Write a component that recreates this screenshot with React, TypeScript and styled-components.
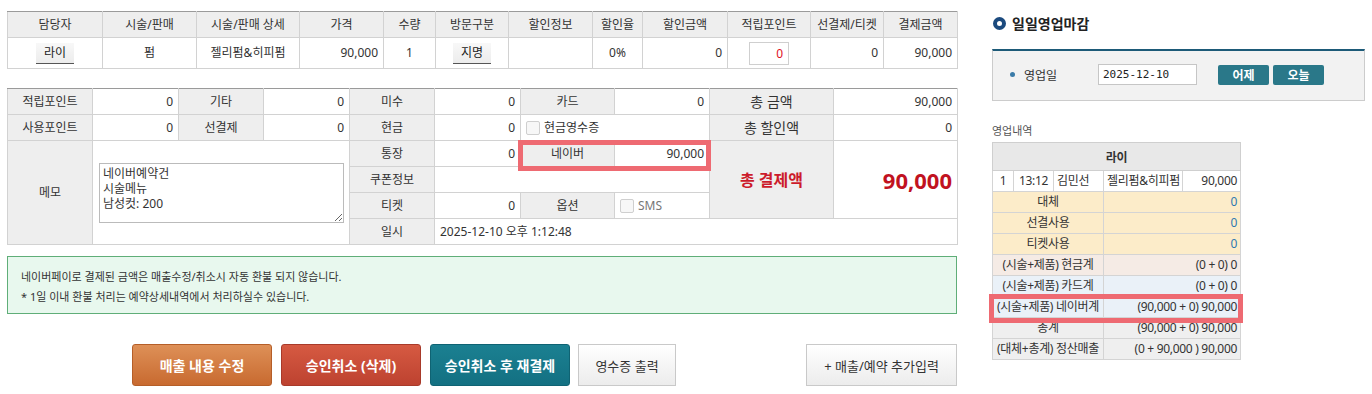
import React from 'react'
import styled, { createGlobalStyle, css } from 'styled-components'

const GlobalStyle = createGlobalStyle`
  body {
    margin: 0;
    background: #fff;
    font-family: "Noto Sans", "Noto Sans CJK KR", sans-serif;
    font-size: 12px;
    color: #333;
  }
`

// ---- layout ----
const Page = styled.div`
  display: flex;
  width: 1372px;
  height: 394px;
  overflow: hidden;
`

const LeftCol = styled.div`
  width: 950px;
  padding: 11px 0 0 7px;
`

const RightCol = styled.div`
  width: 373px;
  margin-left: 35px;
`

// ---- tables ----
const GridTable = styled.table`
  width: 950px;
  border-collapse: collapse;
  table-layout: fixed;
`

const Th = styled.th`
  height: 25px;
  padding: 0;
  background: #eeeeee;
  border: 1px solid #d2d2d2;
  border-top: 1px solid #9a9a9a;
  font-weight: normal;
  font-size: 12px;
  color: #333;
  line-height: 14px;
`

const Td = styled.td<{ $align?: string; $h?: number; $top?: boolean }>`
  height: ${p => p.$h ?? 25}px;
  padding: 0 5px;
  border: 1px solid #d2d2d2;
  ${p => p.$top && css`border-top: 1px solid #9a9a9a;`}
  text-align: ${p => p.$align ?? 'center'};
  font-size: 12px;
  color: #333;
  line-height: 14px;
  background: #fff;
`

const LabelTd = styled(Td)<{ $big?: boolean }>`
  background: #eeeeee;
  text-align: center;
  ${p => p.$big && css`
    font-size: 14px;
  `}
`

const SmallBtn = styled.span`
  display: inline-block;
  width: 38px;
  height: 20px;
  line-height: 20px;
  background: linear-gradient(#f8f8f8, #ececec);
  border-bottom: 1px solid #555;
  font-size: 12px;
  color: #222;
`

const PointInput = styled.span`
  display: inline-block;
  box-sizing: border-box;
  width: 40px;
  height: 23px;
  line-height: 21px;
  border: 1px solid #cfcfcf;
  text-align: right;
  padding-right: 5px;
  color: #e0101f;
`

const MidWrap = styled.div`
  position: relative;
  margin-top: 19px;
`

const MemoCell = styled.td`
  border: 1px solid #d2d2d2;
  padding: 0 6px;
  background: #fff;
`

const MemoArea = styled.textarea`
  display: block;
  box-sizing: border-box;
  width: 245px;
  height: 60px;
  border: 1px solid #bbb;
  padding: 2px 3px;
  resize: both;
  font-family: "Noto Sans", "Noto Sans CJK KR", sans-serif;
  font-size: 12px;
  line-height: 15px;
  color: #333;
`

const Check = styled.label<{ $muted?: boolean }>`
  display: flex;
  align-items: center;
  gap: 4px;
  color: ${p => (p.$muted ? '#777' : '#333')};
  &::before {
    content: '';
    width: 12px;
    height: 12px;
    border: 1px solid #cfcfcf;
    border-radius: 2px;
    background: #f7f7f7;
  }
`

const TotalLabel = styled(LabelTd)`
  font-size: 16px;
  font-weight: bold;
  color: #cc1b2b;
`

const TotalValue = styled(Td)`
  text-align: right;
  font-size: 22px;
  font-weight: bold;
  color: #c1121f;
  padding-right: 5px;
`

const Highlight = styled.div<{ $l: number; $t: number; $w: number; $h: number }>`
  position: absolute;
  left: ${p => p.$l}px;
  top: ${p => p.$t}px;
  width: ${p => p.$w}px;
  height: ${p => p.$h}px;
  box-sizing: border-box;
  border: 5px solid #ee6a72;
  pointer-events: none;
`

// ---- notice / buttons ----
const Notice = styled.div`
  margin-top: 11px;
  box-sizing: border-box;
  height: 58px;
  padding: 10px 13px;
  background: #e8f8ee;
  border: 1px solid #5fae78;
  font-size: 11px;
  line-height: 20px;
  color: #333;
`

const ButtonRow = styled.div`
  display: flex;
  align-items: center;
  gap: 8px;
  margin-top: 30px;
  padding-left: 125px;
`

const palette = {
  orange: ['#de9057', '#c86a30', '#b55e28'],
  red: ['#d65a42', '#bd4230', '#a83a2a'],
  teal: ['#1b8091', '#137082', '#0f6373'],
}

const ColorBtn = styled.button<{ $tone: keyof typeof palette }>`
  width: 140px;
  height: 42px;
  border-radius: 3px;
  border: 1px solid ${p => palette[p.$tone][2]};
  background: linear-gradient(${p => palette[p.$tone][0]}, ${p => palette[p.$tone][1]});
  color: #fff;
  font-family: inherit;
  font-size: 14px;
  font-weight: bold;
  & + & { margin-left: 1px; }
`

const GrayBtn = styled.button<{ $w: number; $push?: boolean }>`
  width: ${p => p.$w}px;
  height: 42px;
  border: 1px solid #c9c9c9;
  background: linear-gradient(#ffffff, #ececec);
  color: #333;
  font-family: inherit;
  font-size: 13px;
  ${p => p.$push && css`margin-left: auto;`}
`

// ---- right panel ----
const Title = styled.h3`
  display: flex;
  align-items: center;
  gap: 6px;
  height: 46px;
  margin: 0;
  font-size: 14px;
  font-weight: bold;
  color: #222;
  &::before {
    content: '';
    box-sizing: border-box;
    width: 13px;
    height: 13px;
    margin-left: 1px;
    border-radius: 50%;
    border: 4px solid #1b4a7e;
  }
`

const DateBox = styled.div`
  display: flex;
  align-items: center;
  box-sizing: border-box;
  margin-top: 3px;
  height: 52px;
  padding-left: 17px;
  background: #f2f2f2;
  border: 1px solid #cccccc;
  border-top: 2px solid #1d5a78;
  padding-bottom: 2px;
`

const Dot = styled.span`
  width: 5px;
  height: 5px;
  border-radius: 50%;
  background: #3b7ba8;
  margin-right: 9px;
`

const FieldName = styled.span`
  width: 74px;
  font-size: 12px;
  color: #333;
`

const DateInput = styled.span`
  box-sizing: border-box;
  width: 99px;
  height: 21px;
  line-height: 19px;
  padding-left: 4px;
  border: 1px solid #c6c6c6;
  background: #fff;
  font-family: "DejaVu Sans Mono", monospace;
  font-size: 11px;
  color: #222;
`

const DayBtn = styled.button`
  width: 51px;
  height: 20px;
  padding: 0;
  border: none;
  border-radius: 2px;
  background: #2a7889;
  color: #fff;
  font-family: inherit;
  font-size: 12px;
  font-weight: bold;
  & + & { margin-left: 4px; }
  &:first-of-type { margin-left: 21px; }
`

const SubLabel = styled.div`
  margin-top: 23px;
  height: 14px;
  line-height: 14px;
  font-size: 11px;
  color: #555;
`

const SalesWrap = styled.div`
  position: relative;
`

const SalesTable = styled.table`
  margin-top: 4px;
  width: 248px;
  border-collapse: collapse;
  table-layout: fixed;
  letter-spacing: -0.3px;
`

const SalesHead = styled.th`
  height: 27px;
  padding: 0;
  background: #e8e8e8;
  border: 1px solid #cfcfcf;
  font-size: 12px;
  font-weight: bold;
  color: #333;
`

const rowTones = {
  white: '#ffffff',
  cream: '#fcecc9',
  peach: '#f5ebe5',
  blue: '#eaf1f8',
  gray: '#efefef',
}

const STd = styled.td<{ $tone?: keyof typeof rowTones; $align?: string; $blue?: boolean }>`
  height: 20px;
  padding: 0 3px;
  border: 1px solid #d4d4d4;
  background: ${p => rowTones[p.$tone ?? 'white']};
  text-align: ${p => p.$align ?? 'center'};
  font-size: 12px;
  line-height: 14px;
  color: ${p => (p.$blue ? '#2f78b0' : '#333')};
  white-space: nowrap;
  overflow: hidden;
`

const summaryRows: { label: string; value: string; tone: keyof typeof rowTones; blue?: boolean }[] = [
  { label: '대체', value: '0', tone: 'cream', blue: true },
  { label: '선결사용', value: '0', tone: 'cream', blue: true },
  { label: '티켓사용', value: '0', tone: 'cream', blue: true },
  { label: '(시술+제품) 현금계', value: '(0 + 0) 0', tone: 'peach' },
  { label: '(시술+제품) 카드계', value: '(0 + 0) 0', tone: 'blue' },
  { label: '(시술+제품) 네이버계', value: '(90,000 + 0) 90,000', tone: 'blue' },
  { label: '총계', value: '(90,000 + 0) 90,000', tone: 'gray' },
  { label: '(대체+총계) 정산매출', value: '(0 + 90,000 ) 90,000', tone: 'gray' },
]

const headers = ['담당자', '시술/판매', '시술/판매 상세', '가격', '수량', '방문구분', '할인정보', '할인율', '할인금액', '적립포인트', '선결제/티켓', '결제금액']
const topWidths = [95, 94, 103, 84, 52, 73, 84, 50, 85, 83, 73, 74]
const midWidths = [85, 86, 85, 86, 85, 86, 94, 95, 124, 124]

export default function App() {
  return (
    <>
      <GlobalStyle />
      <Page>
        <LeftCol>
          <GridTable>
            <colgroup>
              {topWidths.map((w, i) => <col key={i} style={{ width: w }} />)}
            </colgroup>
            <thead>
              <tr>{headers.map(h => <Th key={h}>{h}</Th>)}</tr>
            </thead>
            <tbody>
              <tr>
                <Td $h={30}><SmallBtn>라이</SmallBtn></Td>
                <Td $h={30}>펌</Td>
                <Td $h={30}>젤리펌&amp;히피펌</Td>
                <Td $h={30} $align="right">90,000</Td>
                <Td $h={30}>1</Td>
                <Td $h={30}><SmallBtn>지명</SmallBtn></Td>
                <Td $h={30}></Td>
                <Td $h={30}>0%</Td>
                <Td $h={30} $align="right">0</Td>
                <Td $h={30}><PointInput>0</PointInput></Td>
                <Td $h={30} $align="right">0</Td>
                <Td $h={30} $align="right">90,000</Td>
              </tr>
            </tbody>
          </GridTable>

          <MidWrap>
            <GridTable>
              <colgroup>
                {midWidths.map((w, i) => <col key={i} style={{ width: w }} />)}
              </colgroup>
              <tbody>
                <tr>
                  <LabelTd $top>적립포인트</LabelTd>
                  <Td $top $align="right">0</Td>
                  <LabelTd $top>기타</LabelTd>
                  <Td $top $align="right">0</Td>
                  <LabelTd $top>미수</LabelTd>
                  <Td $top $align="right">0</Td>
                  <LabelTd $top>카드</LabelTd>
                  <Td $top $align="right">0</Td>
                  <LabelTd $top $big>총 금액</LabelTd>
                  <Td $top $align="right">90,000</Td>
                </tr>
                <tr>
                  <LabelTd>사용포인트</LabelTd>
                  <Td $align="right">0</Td>
                  <LabelTd>선결제</LabelTd>
                  <Td $align="right">0</Td>
                  <LabelTd>현금</LabelTd>
                  <Td $align="right">0</Td>
                  <Td colSpan={2} $align="left"><Check>현금영수증</Check></Td>
                  <LabelTd $big>총 할인액</LabelTd>
                  <Td $align="right">0</Td>
                </tr>
                <tr>
                  <LabelTd rowSpan={4}>메모</LabelTd>
                  <MemoCell colSpan={3} rowSpan={4}>
                    <MemoArea defaultValue={'네이버예약건\n시술메뉴\n남성컷: 200'} />
                  </MemoCell>
                  <LabelTd>통장</LabelTd>
                  <Td $align="right">0</Td>
                  <LabelTd>네이버</LabelTd>
                  <Td $align="right">90,000</Td>
                  <TotalLabel rowSpan={3}>총 결제액</TotalLabel>
                  <TotalValue rowSpan={3}>90,000</TotalValue>
                </tr>
                <tr>
                  <LabelTd>쿠폰정보</LabelTd>
                  <Td colSpan={3}></Td>
                </tr>
                <tr>
                  <LabelTd>티켓</LabelTd>
                  <Td $align="right">0</Td>
                  <LabelTd>옵션</LabelTd>
                  <Td $align="left"><Check $muted>SMS</Check></Td>
                </tr>
                <tr>
                  <LabelTd>일시</LabelTd>
                  <Td colSpan={5} $align="left">2025-12-10 오후 1:12:48</Td>
                </tr>
              </tbody>
            </GridTable>
            <Highlight $l={511} $t={52} $w={193} $h={31} />
          </MidWrap>

          <Notice>
            네이버페이로 결제된 금액은 매출수정/취소시 자동 환불 되지 않습니다.<br />
            * 1일 이내 환불 처리는 예약상세내역에서 처리하실수 있습니다.
          </Notice>

          <ButtonRow>
            <ColorBtn $tone="orange">매출 내용 수정</ColorBtn>
            <ColorBtn $tone="red">승인취소 (삭제)</ColorBtn>
            <ColorBtn $tone="teal">승인취소 후 재결제</ColorBtn>
            <GrayBtn $w={98}>영수증 출력</GrayBtn>
            <GrayBtn $w={151} $push>+ 매출/예약 추가입력</GrayBtn>
          </ButtonRow>
        </LeftCol>

        <RightCol>
          <Title>일일영업마감</Title>
          <DateBox>
            <Dot />
            <FieldName>영업일</FieldName>
            <DateInput>2025-12-10</DateInput>
            <DayBtn>어제</DayBtn>
            <DayBtn>오늘</DayBtn>
          </DateBox>

          <SubLabel>영업내역</SubLabel>
          <SalesWrap>
            <SalesTable>
              <colgroup>
                <col style={{ width: 21 }} />
                <col style={{ width: 40 }} />
                <col style={{ width: 50 }} />
                <col style={{ width: 79 }} />
                <col style={{ width: 58 }} />
              </colgroup>
              <thead>
                <tr><SalesHead colSpan={5}>라이</SalesHead></tr>
              </thead>
              <tbody>
                <tr>
                  <STd>1</STd>
                  <STd>13:12</STd>
                  <STd $align="left">김민선</STd>
                  <STd>젤리펌&amp;히피펌</STd>
                  <STd $align="right">90,000</STd>
                </tr>
                {summaryRows.map(r => (
                  <tr key={r.label}>
                    <STd colSpan={3} $tone={r.tone}>{r.label}</STd>
                    <STd colSpan={2} $tone={r.tone} $align="right" $blue={r.blue}>{r.value}</STd>
                  </tr>
                ))}
              </tbody>
            </SalesTable>
            <Highlight $l={-3} $t={152} $w={254} $h={29} />
          </SalesWrap>
        </RightCol>
      </Page>
    </>
  )
}
